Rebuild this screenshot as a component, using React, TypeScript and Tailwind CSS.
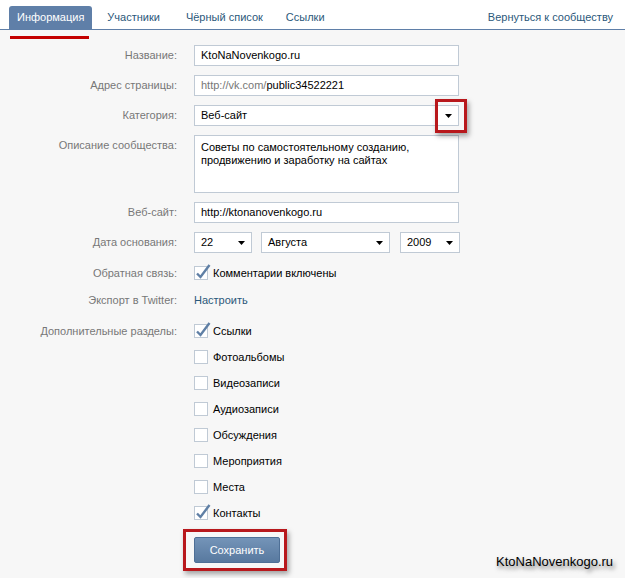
import React from "react";

const font = "font-['Tahoma','Liberation_Sans',sans-serif]";

function Arrow() {
  return (
    <svg width="7" height="4" viewBox="0 0 7 4" className="shrink-0">
      <path d="M0 0h7L3.5 4z" fill="#000" />
    </svg>
  );
}

function Check({ checked }: { checked?: boolean }) {
  return (
    <div className="relative w-[14px] h-[14px] border border-[#c0cad5] bg-white shrink-0">
      {checked && (
        <svg width="18" height="18" viewBox="0 0 18 18" className="absolute left-[-1px] top-[-5px]">
          <path d="M3 11.5 L6.5 15 L15.5 3" stroke="#5f7fa5" strokeWidth="2.4" fill="none" />
        </svg>
      )}
    </div>
  );
}

function Row({ label, children, className = "", top = false }: { label: string; children: React.ReactNode; className?: string; top?: boolean }) {
  return (
    <div className={`flex ${top ? "items-start" : "items-center"} ${className}`}>
      <div className={`w-[177px] text-right text-[#777] shrink-0 ${top ? "pt-[4px]" : ""}`}>{label}</div>
      <div className="ml-[17px] flex items-center">{children}</div>
    </div>
  );
}

function Input({ children, w = "w-[265px]" }: { children: React.ReactNode; w?: string }) {
  return (
    <div className={`${w} h-[21px] border border-[#c0cad5] bg-white flex items-center px-[6px] text-black`}>{children}</div>
  );
}

function Select({ value, w }: { value: string; w: string }) {
  return (
    <div className={`${w} h-[21px] border border-[#c0cad5] bg-white flex items-center justify-between pl-[6px] pr-[6px] text-black`}>
      <span>{value}</span>
      <Arrow />
    </div>
  );
}

export default function App() {
  const extras = [
    { name: "Ссылки", checked: true },
    { name: "Фотоальбомы" },
    { name: "Видеозаписи" },
    { name: "Аудиозаписи" },
    { name: "Обсуждения" },
    { name: "Мероприятия" },
    { name: "Места" },
    { name: "Контакты", checked: true },
  ];

  return (
    <div className={`relative w-[625px] h-[578px] overflow-hidden bg-[#f7f7f7] text-[11px] leading-[13px] ${font}`}>
      {/* Tabs */}
      <div className="h-[30px] bg-white border-b border-[#5f7fa8] flex items-end pl-[9px] pr-[12px]">
        <div className="h-[23px] px-[8px] flex items-center bg-[#5f7fa8] text-white rounded-t-[3px]">Информация</div>
        <div className="h-[23px] px-[15px] flex items-center text-[#2b587a]">Участники</div>
        <div className="h-[23px] px-[11px] flex items-center text-[#2b587a]">Чёрный список</div>
        <div className="h-[23px] px-[12px] flex items-center text-[#2b587a]">Ссылки</div>
        <div className="ml-auto h-[23px] flex items-center text-[#2b587a]">Вернуться к сообществу</div>
      </div>
      <div className="absolute left-[10px] top-[36px] w-[79px] h-[3px] bg-[#c40000]" />

      {/* Form */}
      <div className="pt-[15px]">
        <Row label="Название:">
          <Input>KtoNaNovenkogo.ru</Input>
        </Row>
        <Row label="Адрес страницы:" className="mt-[9px]">
          <Input>
            <span className="text-[#777]">http://vk.com/</span>
            <span>public34522221</span>
          </Input>
        </Row>
        <Row label="Категория:" className="mt-[9px]">
          <div className="w-[265px] h-[21px] border border-[#c0cad5] bg-white flex items-center justify-between px-[6px]">
            <span>Веб-сайт</span>
            <Arrow />
          </div>
        </Row>
        <Row label="Описание сообщества:" className="mt-[9px]" top>
          <div className="w-[265px] h-[58px] border border-[#c0cad5] bg-white px-[6px] pt-[5px] text-black">
            Советы по самостоятельному созданию,
            <br />
            продвижению и заработку на сайтах
          </div>
        </Row>
        <Row label="Веб-сайт:" className="mt-[9px]">
          <Input>http://ktonanovenkogo.ru</Input>
        </Row>
        <Row label="Дата основания:" className="mt-[9px]">
          <Select value="22" w="w-[58px]" />
          <div className="ml-[9px]">
            <Select value="Августа" w="w-[129px]" />
          </div>
          <div className="ml-[10px]">
            <Select value="2009" w="w-[60px]" />
          </div>
        </Row>
        <Row label="Обратная связь:" className="mt-[10px] h-[20px]">
          <Check checked />
          <span className="ml-[5px] text-black">Комментарии включены</span>
        </Row>
        <Row label="Экспорт в Twitter:" className="mt-[7px] h-[20px]">
          <span className="text-[#2b587a]">Настроить</span>
        </Row>
        <div className="mt-[11px] flex flex-col gap-[6px]">
          {extras.map((e, i) => (
            <Row key={e.name} label={i === 0 ? "Дополнительные разделы:" : ""} className="h-[20px]">
              <Check checked={e.checked} />
              <span className="ml-[5px] text-black">{e.name}</span>
            </Row>
          ))}
        </div>
        <div className="mt-[14px] ml-[194px]">
          <button className="w-[86px] h-[26px] rounded-[2px] border border-[#4e6f96] bg-gradient-to-b from-[#7494b8] to-[#58799f] text-white text-[11px]">
            Сохранить
          </button>
        </div>
      </div>

      {/* Annotations */}
      <div className="absolute left-[435px] top-[99px] w-[32px] h-[34px] border-[3px] border-[#b8181c] shadow-[2px_3px_5px_rgba(0,0,0,0.35)]" />
      <div className="absolute left-[183px] top-[529px] w-[104px] h-[42px] border-[3px] border-[#b8181c] shadow-[2px_3px_5px_rgba(0,0,0,0.35)]" />
      <div className="absolute left-[496px] top-[554px] text-[13px] leading-[16px] text-black font-['Liberation_Sans',sans-serif] [text-shadow:2px_3px_4px_rgba(0,0,0,0.55)]">
        KtoNaNovenkogo.ru
      </div>
    </div>
  );
}
